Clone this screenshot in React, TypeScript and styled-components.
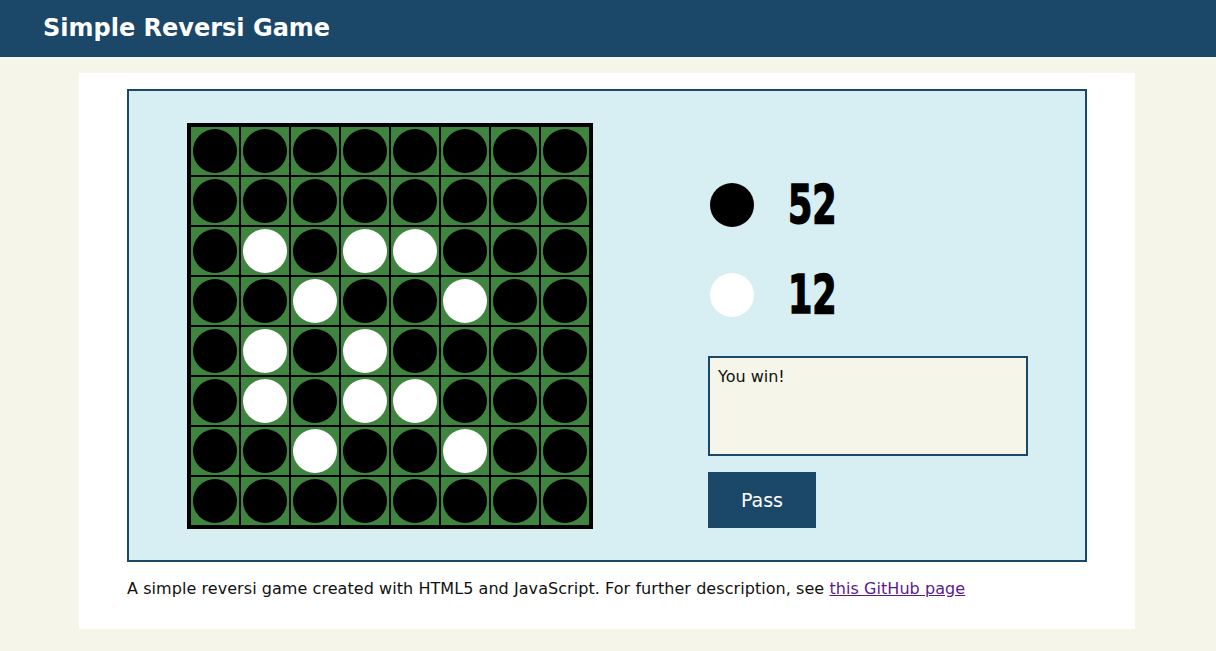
import styled, { createGlobalStyle } from "styled-components";

const GlobalStyle = createGlobalStyle`
  html, body {
    margin: 0;
    padding: 0;
    background: #f5f5e9;
    font-family: "DejaVu Sans", Verdana, sans-serif;
    color: #111;
  }
`;

const Header = styled.header`
  height: 57px;
  background: #1b4769;
  display: flex;
  align-items: center;
  padding-left: 43px;
`;

const Title = styled.h1`
  margin: 0 0 2px;
  color: #fff;
  font-size: 24px;
  font-weight: bold;
`;

const Container = styled.main`
  width: 1056px;
  margin: 16px 0 0 79px;
  background: #fff;
  padding: 16px 48px 31px;
  box-sizing: border-box;
`;

const Panel = styled.section`
  border: 2px solid #1b4769;
  background: #d7eef3;
  height: 473px;
  box-sizing: border-box;
  display: flex;
  padding: 32px 0 0 58px;
`;

const Board = styled.div`
  display: grid;
  grid-template-columns: repeat(8, 48px);
  grid-auto-rows: 48px;
  gap: 2px;
  background: #000;
  border: 4px solid #000;
  align-self: flex-start;
`;

const Cell = styled.div`
  background: #3f853f;
  display: flex;
  align-items: center;
  justify-content: center;
`;

const Disc = styled.div<{ $white?: boolean }>`
  width: 44px;
  height: 44px;
  border-radius: 50%;
  background: ${(p) => (p.$white ? "#fff" : "#000")};
`;

const Side = styled.div`
  margin-left: 115px;
  padding-top: 60px;
  display: flex;
  flex-direction: column;
`;

const ScoreRow = styled.div`
  display: flex;
  align-items: center;
  height: 44px;
  margin-left: 2px;
  margin-bottom: 46px;
`;

const Count = styled.span`
  margin-left: 34px;
  font-family: "DejaVu Sans Condensed", "DejaVu Sans", sans-serif;
  font-weight: bold;
  font-size: 54px;
  letter-spacing: 0;
  line-height: 1;
  color: #000;
  -webkit-text-stroke: 1.5px #000;
  transform: scaleX(0.72);
  transform-origin: left center;
`;

const Message = styled.div`
  margin-top: -7px;
  width: 320px;
  height: 100px;
  box-sizing: border-box;
  border: 2px solid #1b4769;
  background: #f5f5e9;
  padding: 9px 8px;
  font-size: 16px;
`;

const PassButton = styled.button`
  margin-top: 16px;
  width: 108px;
  height: 56px;
  border: none;
  background: #1b4769;
  color: #fff;
  font-family: "DejaVu Sans", Verdana, sans-serif;
  font-size: 19px;
  cursor: pointer;
`;

const Footer = styled.p`
  margin: 17px 0 0;
  font-size: 16px;
  letter-spacing: 0.06px;

  a {
    color: #5a1a8b;
  }
`;

const layout = [
  "BBBBBBBB",
  "BBBBBBBB",
  "BWBWWBBB",
  "BBWBBWBB",
  "BWBWBBBB",
  "BWBWWBBB",
  "BBWBBWBB",
  "BBBBBBBB",
];

export default function App() {
  const cells = layout.flatMap((row) => row.split(""));
  const black = cells.filter((c) => c === "B").length;
  const white = cells.filter((c) => c === "W").length;

  return (
    <>
      <GlobalStyle />
      <Header>
        <Title>Simple Reversi Game</Title>
      </Header>
      <Container>
        <Panel>
          <Board>
            {cells.map((c, i) => (
              <Cell key={i}>
                <Disc $white={c === "W"} />
              </Cell>
            ))}
          </Board>
          <Side>
            <ScoreRow>
              <Disc />
              <Count>{black}</Count>
            </ScoreRow>
            <ScoreRow>
              <Disc $white />
              <Count>{white}</Count>
            </ScoreRow>
            <Message>You win!</Message>
            <PassButton>Pass</PassButton>
          </Side>
        </Panel>
        <Footer>
          A simple reversi game created with HTML5 and JavaScript. For further
          description, see <a href="#">this GitHub page</a>
        </Footer>
      </Container>
    </>
  );
}
